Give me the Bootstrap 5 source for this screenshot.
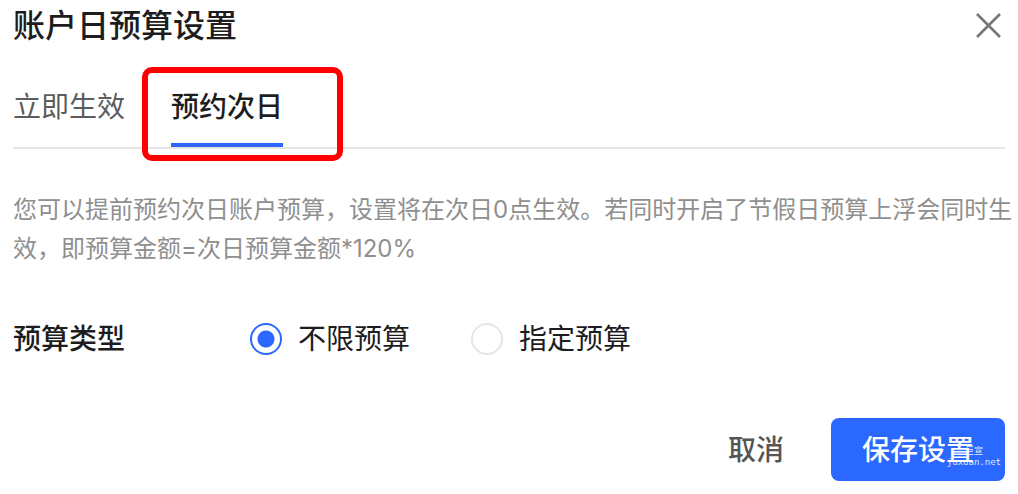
<!DOCTYPE html>
<html lang="zh-CN">
<head>
<meta charset="utf-8">
<meta name="viewport" content="width=device-width, initial-scale=1">
<title>账户日预算设置</title>
<link href="https://cdn.jsdelivr.net/npm/bootstrap@5.3.0/dist/css/bootstrap.min.css" rel="stylesheet">
<style>
  :root { --brand: #2b68ff; --ink: #1d1d1d; --line: #e5e5e5; }
  body { font-family: Inter, "Noto Sans CJK SC", sans-serif; color: var(--ink); background: #fff; font-size: 28px; line-height: 40px; }
  .panel { padding: 0 13px 13px; }
  .panel-title { font-size: 32px; line-height: 52px; font-weight: 500; }
  .close-btn { width: 32px; height: 32px; color: #777; }
  .tabs { gap: 46px; margin-top: 25px; border-bottom: 2px solid var(--line); }
  .tab-btn { padding: 10px 0 16px; color: #5c5c5c; line-height: 40px; border-bottom: 4px solid transparent; }
  .tab-btn.active { color: var(--ink); font-weight: 500; border-color: var(--brand); }
  .callout { inset: -10px -60px -14px -29px; border: 6px solid #f00; border-radius: 10px; pointer-events: none; }
  .hint { font-size: 24px; line-height: 39px; color: #8f8f8f; margin: 41px -8px 0 0; }
  .type-row { margin-top: 51px; }
  .type-label { width: 237px; font-weight: 500; }
  .choices { gap: 61px; }
  .choice { gap: 16px; }
  .choice .form-check-input { width: 32px; height: 32px; border: 2px solid var(--line); }
  .choice .form-check-input:checked { background-color: #fff; border-color: var(--brand); background-image: radial-gradient(circle, var(--brand) 8px, transparent 9px); }
  .actions { gap: 16px; margin-top: 59px; }
  .action-btn { font-size: 28px; line-height: 40px; font-weight: 500; padding: 12px 31px 11px; border: 0; border-radius: 8px; }
  .cancel-btn { color: #555; }
  .save-btn, .save-btn:hover { color: #fff; background: var(--brand); }
  .watermark { right: 4px; bottom: 13px; color: #fff; opacity: .85; font: 9px/11px "DejaVu Sans Mono", "Noto Sans CJK SC", monospace; pointer-events: none; }
</style>
</head>
<body>
<main class="panel">
  <header class="d-flex justify-content-between align-items-center">
    <h1 class="panel-title m-0">账户日预算设置</h1>
    <button type="button" class="close-btn btn p-0 border-0 d-flex" aria-label="关闭">
      <svg width="32" height="32" viewBox="0 0 32 32" fill="none" stroke="currentColor" stroke-width="2.6" aria-hidden="true"><path d="M4 4 27 27M27 4 4 27"/></svg>
    </button>
  </header>

  <nav class="tabs d-flex">
    <button type="button" class="tab-btn bg-transparent border-top-0 border-start-0 border-end-0">立即生效</button>
    <div class="position-relative d-flex">
      <button type="button" class="tab-btn active bg-transparent border-top-0 border-start-0 border-end-0">预约次日</button>
      <span class="callout position-absolute"></span>
    </div>
  </nav>

  <p class="hint">您可以提前预约次日账户预算，设置将在次日0点生效。若同时开启了节假日预算上浮会同时生效，即预算金额=次日预算金额*120%</p>

  <div class="type-row d-flex align-items-center" role="radiogroup" aria-labelledby="type-label">
    <div class="type-label" id="type-label">预算类型</div>
    <div class="choices d-flex">
      <div class="choice d-flex align-items-center">
        <input class="form-check-input m-0 flex-shrink-0" type="radio" name="budget" id="unlimited" checked>
        <label for="unlimited">不限预算</label>
      </div>
      <div class="choice d-flex align-items-center">
        <input class="form-check-input m-0 flex-shrink-0" type="radio" name="budget" id="fixed">
        <label for="fixed">指定预算</label>
      </div>
    </div>
  </div>

  <footer class="actions d-flex justify-content-end">
    <button type="button" class="action-btn cancel-btn btn">取消</button>
    <div class="position-relative">
      <button type="button" class="action-btn save-btn btn">保存设置</button>
      <div class="watermark position-absolute text-center">巨宣<br>juxuan.net</div>
    </div>
  </footer>
</main>
<script src="https://cdn.jsdelivr.net/npm/bootstrap@5.3.0/dist/js/bootstrap.bundle.min.js"></script>
</body>
</html>
